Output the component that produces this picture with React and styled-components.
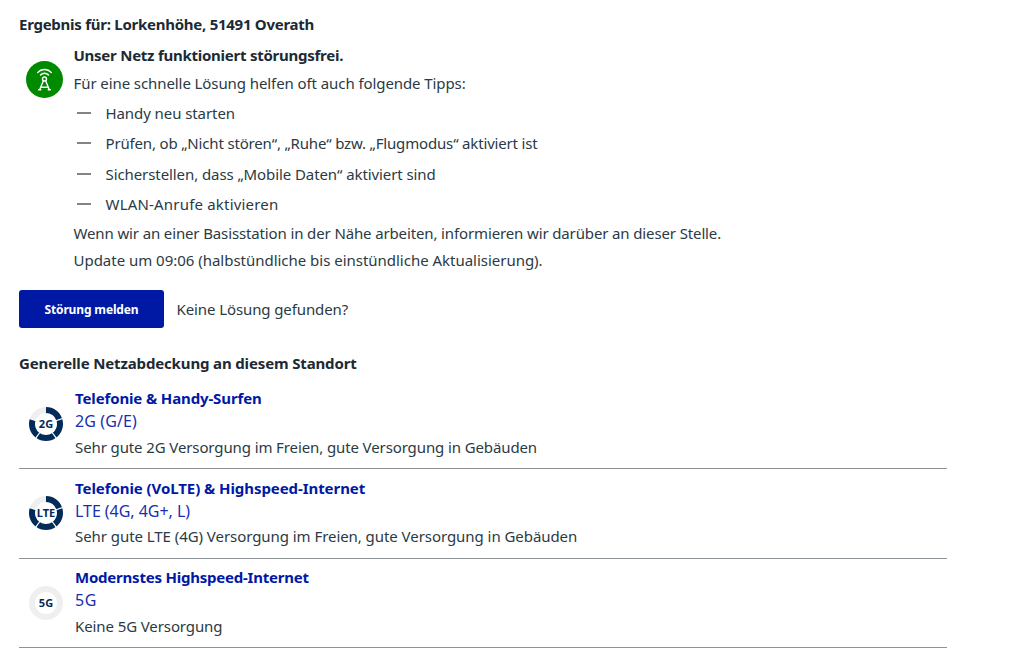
import React from "react";
import styled, { createGlobalStyle } from "styled-components";

const GlobalStyle = createGlobalStyle`
  * {
    box-sizing: border-box;
  }
  body {
    margin: 0;
    background: #fff;
    color: #2b3a44;
    font-family: "Noto Sans", sans-serif;
    font-size: 15px;
  }
`
const Page = styled.main`
  width: 947px;
  padding: 9px 0 0 19px;
`
const Heading = styled.h2`
  margin: 0;
  font-size: 15px;
  font-weight: 700;
  line-height: 30px;
  letter-spacing: ${(p) => p.$spacing}px;
  color: #1c2a35;
  white-space: nowrap;
`
const Status = styled.section`
  display: flex;
  padding-top: 2px;
`
const StatusIcon = styled.svg`
  flex: none;
  width: 37px;
  height: 37px;
  margin: 19.5px 11px 0 6.5px;
`
const StatusBody = styled.div`
  white-space: nowrap;
`
const StatusTitle = styled.h3`
  margin: 0;
  font-size: 15px;
  font-weight: 700;
  line-height: 28px;
  letter-spacing: -0.25px;
  color: #1c2a35;
`
const Text = styled.p`
  margin: 0;
  line-height: ${(p) => p.$line || 27}px;
  letter-spacing: ${(p) => p.$spacing || 0}px;
`
const Tips = styled.ul`
  list-style: none;
  margin: 0;
  padding: 1px 0 1px 3px;
`
const Tip = styled.li`
  display: flex;
  align-items: center;
  gap: 15px;
  line-height: 30.3px;
  letter-spacing: ${(p) => p.$spacing}px;
  &::before {
    content: "";
    width: 14px;
    height: 2px;
    background: #7f8589;
  }
`
const Actions = styled.div`
  display: flex;
  align-items: center;
  gap: 12.5px;
  margin: 16px 0 20px;
`
const Button = styled.button`
  width: 145px;
  height: 38px;
  padding: 0;
  border: none;
  border-radius: 3px;
  background: #0019a5;
  color: #fff;
  font-family: inherit;
  font-size: 12px;
  font-weight: 700;
  letter-spacing: -0.14px;
  cursor: pointer;
`
const Networks = styled.section`
  padding-top: 0.95px;
`
const Row = styled.div`
  display: flex;
  height: 89.75px;
  padding-top: 7.75px;
  border-bottom: 1px solid #8e9498;
`
const Ring = styled.svg`
  flex: none;
  width: 34px;
  height: 34px;
  margin: 19.7px 12px 0 10px;
  text {
    font-size: 11px;
    font-weight: 700;
    fill: #032b5a;
    text-anchor: middle;
    stroke: #fff;
    stroke-width: 1.5px;
    paint-order: stroke;
  }
`
const RowBody = styled.div`
  white-space: nowrap;
`
const RowTitle = styled.h3`
  margin: 0;
  font-size: 15px;
  font-weight: 700;
  line-height: 23px;
  letter-spacing: ${(p) => p.$spacing}px;
  color: #0019a5;
`
const RowTech = styled.div`
  font-size: 16px;
  line-height: 23.65px;
  letter-spacing: ${(p) => p.$spacing}px;
  color: #1a2fae;
`

const tips = [
  { text: "Handy neu starten", spacing: -0.08 },
  { text: "Prüfen, ob „Nicht stören“, „Ruhe“ bzw. „Flugmodus“ aktiviert ist", spacing: -0.165 },
  { text: "Sicherstellen, dass „Mobile Daten“ aktiviert sind", spacing: -0.085 },
  { text: "WLAN-Anrufe aktivieren", spacing: 0.19 },
]

const networks = [
  {
    label: "2G",
    level: 4,
    title: ["Telefonie & Handy-Surfen", -0.13],
    tech: ["2G (G/E)", 0.1],
    text: ["Sehr gute 2G Versorgung im Freien, gute Versorgung in Gebäuden", -0.11],
  },
  {
    label: "LTE",
    level: 4,
    title: ["Telefonie (VoLTE) & Highspeed-Internet", -0.07],
    tech: ["LTE (4G, 4G+, L)", -0.04],
    text: ["Sehr gute LTE (4G) Versorgung im Freien, gute Versorgung in Gebäuden", -0.055],
  },
  {
    label: "5G",
    level: 0,
    title: ["Modernstes Highspeed-Internet", -0.22],
    tech: ["5G", 0.5],
    text: ["Keine 5G Versorgung", -0.1],
  },
]

// ring of five segments, filled clockwise from the top
const CoverageRing = ({ label, level }) => (
  <Ring viewBox="0 0 34 34">
    <circle cx="17" cy="17" r="14" fill="none" stroke="#efefef" strokeWidth="6" />
    {Array.from({ length: level }, (_, i) => (
      <circle
        key={i}
        cx="17"
        cy="17"
        r="14"
        fill="none"
        stroke="#032b5a"
        strokeWidth="6"
        pathLength="360"
        strokeDasharray="72 288"
        transform={`rotate(${i * 72 - 90} 17 17)`}
      />
    ))}
    {level > 0 && [1, 2, 3, 4].map((i) => (
      <path key={i} d="M17 6.5V-1" stroke="#fff" strokeWidth="1.2" transform={`rotate(${i * 72} 17 17)`} />
    ))}
    <text x="17" y="21">{label}</text>
  </Ring>
)

const AntennaIcon = () => (
  <StatusIcon viewBox="0 0 37 37" fill="none" stroke="#fff" strokeWidth="1.4" strokeLinecap="round">
    <circle cx="18.5" cy="18.5" r="18.5" fill="#008a00" stroke="none" />
    <path d="M11.6 11.6C15.4 7.4 21.6 7.4 25.4 11.6" />
    <path d="M14.5 14C16.7 11.6 20.3 11.6 22.5 14" />
    <circle cx="18.5" cy="18" r="2" />
    <path d="M17.3 20L13.6 28.8M19.7 20L23.4 28.8M15 26.3H22M12.6 28.8H14.8M22.2 28.8H24.4" />
  </StatusIcon>
)

export default function App() {
  return (
    <>
      <GlobalStyle />
      <Page>
        <Heading $spacing={-0.26}>Ergebnis für: Lorkenhöhe, 51491 Overath</Heading>
        <Status>
          <AntennaIcon />
          <StatusBody>
            <StatusTitle>Unser Netz funktioniert störungsfrei.</StatusTitle>
            <Text $line={28} $spacing={-0.085}>Für eine schnelle Lösung helfen oft auch folgende Tipps:</Text>
            <Tips>
              {tips.map((tip) => (
                <Tip key={tip.text} $spacing={tip.spacing}>{tip.text}</Tip>
              ))}
            </Tips>
            <Text $spacing={-0.13}>
              Wenn wir an einer Basisstation in der Nähe arbeiten, informieren wir darüber an dieser Stelle.
            </Text>
            <Text $spacing={-0.02}>Update um 09:06 (halbstündliche bis einstündliche Aktualisierung).</Text>
          </StatusBody>
        </Status>
        <Actions>
          <Button>Störung melden</Button>
          <Text $spacing={-0.1}>Keine Lösung gefunden?</Text>
        </Actions>
        <Heading $spacing={-0.145}>Generelle Netzabdeckung an diesem Standort</Heading>
        <Networks>
          {networks.map((n) => (
            <Row key={n.label}>
              <CoverageRing label={n.label} level={n.level} />
              <RowBody>
                <RowTitle $spacing={n.title[1]}>{n.title[0]}</RowTitle>
                <RowTech $spacing={n.tech[1]}>{n.tech[0]}</RowTech>
                <Text $line={27.5} $spacing={n.text[1]}>{n.text[0]}</Text>
              </RowBody>
            </Row>
          ))}
        </Networks>
      </Page>
    </>
  )
}
